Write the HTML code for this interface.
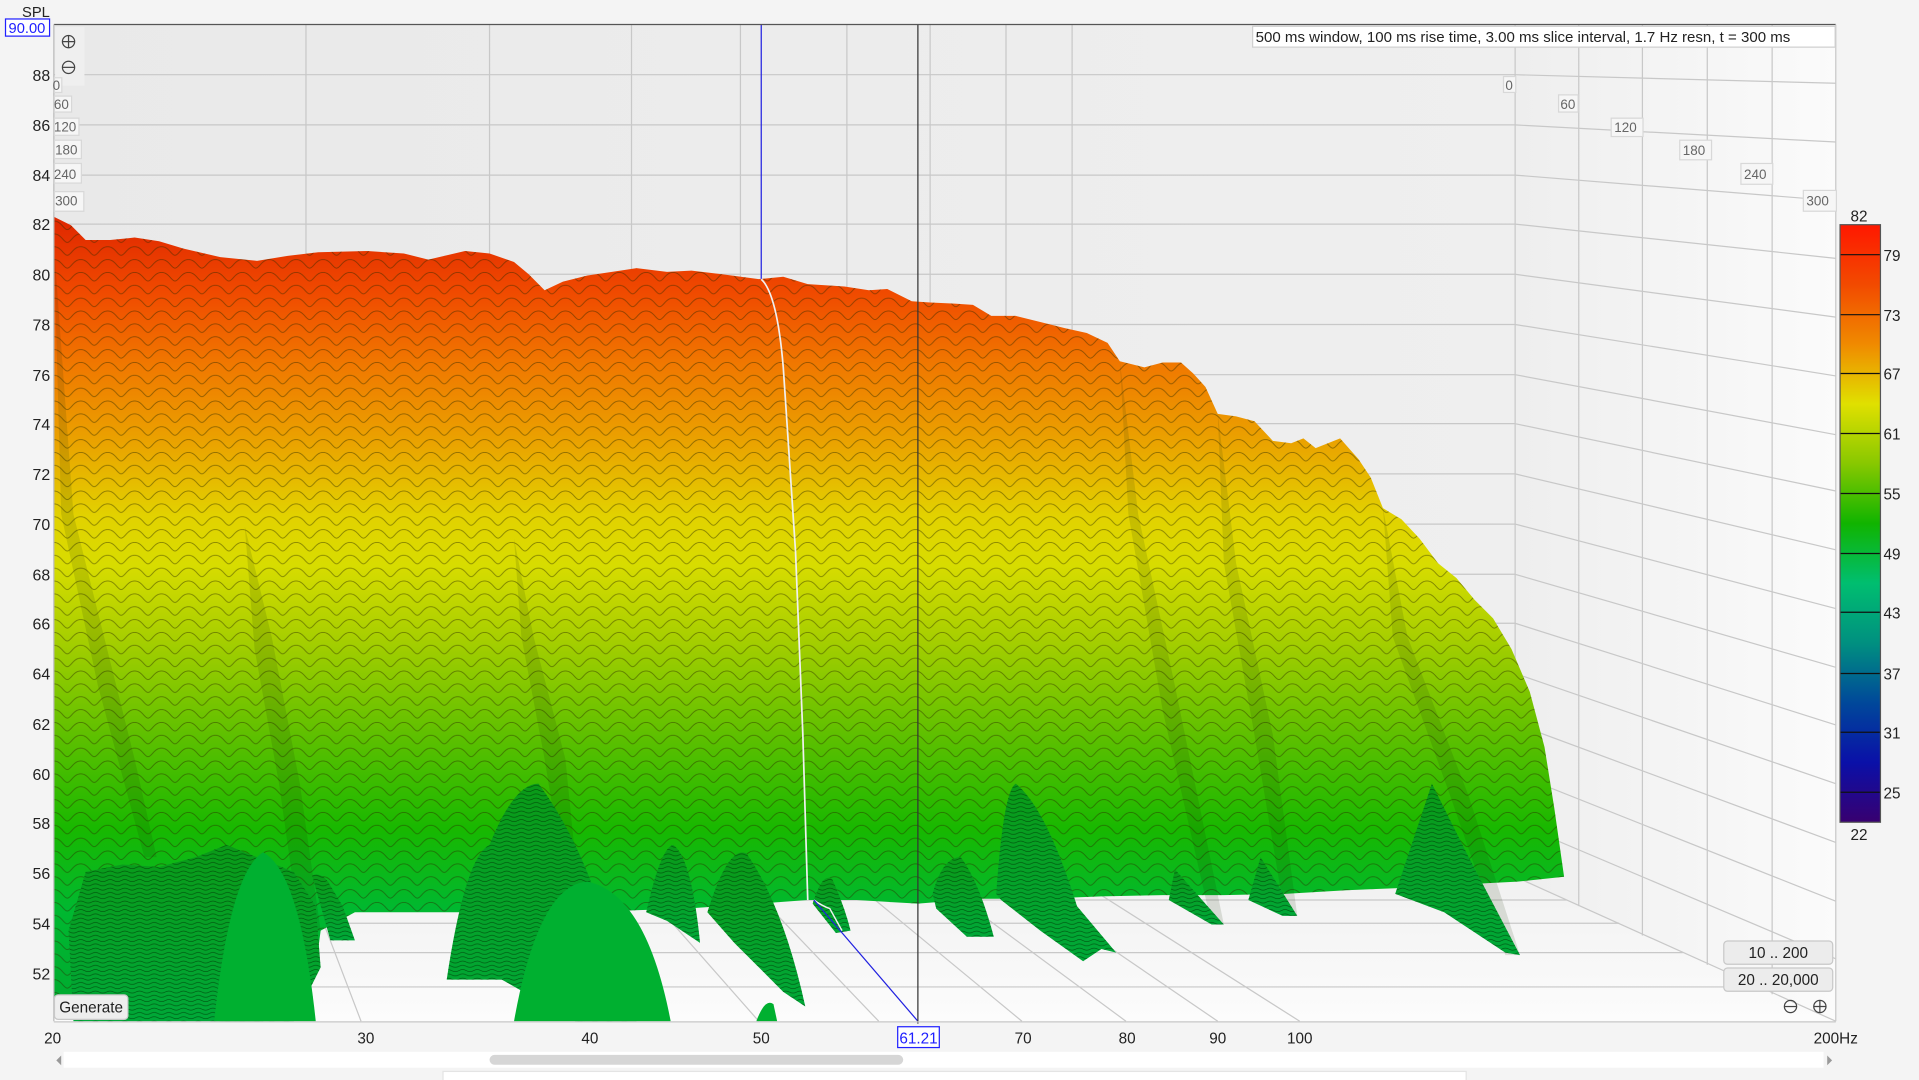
<!DOCTYPE html>
<html><head><meta charset="utf-8"><style>
html,body{margin:0;padding:0;background:#f4f4f4;overflow:hidden}
svg{display:block}
text{font-family:"Liberation Sans",Arial,sans-serif}
</style></head><body>
<svg width="1919" height="1080" viewBox="0 0 1568 882" preserveAspectRatio="none" xmlns="http://www.w3.org/2000/svg">
<defs>
<linearGradient id="wall" x1="0" y1="0" x2="1" y2="0">
<stop offset="0" stop-color="#e9e9e9"/><stop offset="1" stop-color="#efefef"/></linearGradient>
<linearGradient id="rwall" x1="0" y1="0" x2="1" y2="0">
<stop offset="0" stop-color="#eeeeee"/><stop offset="1" stop-color="#fbfbfb"/></linearGradient>
<linearGradient id="floor" x1="0" y1="0" x2="0" y2="1">
<stop offset="0" stop-color="#f1f1f1"/><stop offset="1" stop-color="#fcfcfc"/></linearGradient>
<linearGradient id="surf" gradientUnits="userSpaceOnUse" x1="0" y1="180" x2="0" y2="834">
<stop offset="0" stop-color="#e02800"/>
<stop offset="0.09" stop-color="#f04a00"/>
<stop offset="0.18" stop-color="#f07800"/>
<stop offset="0.28" stop-color="#eaa400"/>
<stop offset="0.37" stop-color="#e2d200"/>
<stop offset="0.43" stop-color="#d8dc00"/>
<stop offset="0.52" stop-color="#a8cf00"/>
<stop offset="0.64" stop-color="#60c000"/>
<stop offset="0.76" stop-color="#18b800"/>
<stop offset="0.86" stop-color="#00b830"/>
<stop offset="1" stop-color="#00a830"/>
</linearGradient>
<linearGradient id="mound" x1="0" y1="0" x2="0" y2="1">
<stop offset="0" stop-color="#0a9a18"/><stop offset="1" stop-color="#00a838"/></linearGradient>
<linearGradient id="cbar" x1="0" y1="0" x2="0" y2="1">
<stop offset="0" stop-color="#ff1800"/>
<stop offset="0.1" stop-color="#f24a00"/>
<stop offset="0.2" stop-color="#f08a00"/>
<stop offset="0.3" stop-color="#e0e000"/>
<stop offset="0.4" stop-color="#88c800"/>
<stop offset="0.5" stop-color="#10b400"/>
<stop offset="0.6" stop-color="#00be70"/>
<stop offset="0.7" stop-color="#009080"/>
<stop offset="0.8" stop-color="#00489a"/>
<stop offset="0.9" stop-color="#0a10a8"/>
<stop offset="1" stop-color="#380070"/>
</linearGradient>
<pattern id="c" width="22" height="10.5" patternUnits="userSpaceOnUse">
<path d="M0 2 C6 2 8 9 11 9 S16 2 22 2" fill="none" stroke="#2a2a00" stroke-opacity=".5" stroke-width=".7"/>
</pattern>
<pattern id="cm" width="12" height="3.5" patternUnits="userSpaceOnUse">
<path d="M0 2.5 C3 2.5 3 0.8 6 0.8 S9 2.5 12 2.5" fill="none" stroke="#002800" stroke-opacity=".7" stroke-width=".5"/>
</pattern>
<path id="s" d="M44 177 L58 184 L70 196 L90 196 L110 194 L130 197 L150 203 L180 210 L210 213 L235 209 L260 206 L300 205 L330 207 L350 212 L380 205 L400 207 L420 214 L432 224 L445 237 L460 230 L480 225 L500 222 L520 219 L545 222 L565 221 L590 224 L620 228 L640 226 L660 232 L690 234 L710 237 L725 236 L745 246 L760 247 L780 248 L795 249 L810 258 L830 258 L850 263 L870 268 L888 272 L905 280 L915 295 L935 300 L950 296 L965 296 L975 305 L985 316 L995 338 L1010 340 L1025 344 L1040 360 L1055 362 L1065 358 L1075 366 L1085 362 L1095 358 L1110 375 L1120 390 L1130 415 L1145 424 L1160 440 L1175 460 L1190 472 L1205 490 L1220 505 L1235 530 L1250 565 L1262 610 L1270 660 L1278 716 L1240 720 L1200 722 L1150 725 L1100 727 L1050 730 L1000 731 L950 731 L900 732 L850 734 L800 734 L750 738 L700 735 L660 735 L620 738 L560 742 L500 744 L440 745 L380 745 L320 745 L290 745 L262 760 L258 790 L240 812 L215 834 L180 834 L140 826 L110 826 L80 830 L44 830 Z"/>
<path id="m1" d="M60 834 L56 760 L70 712 L100 706 L130 708 L160 700 L185 690 L210 700 L240 712 L258 740 L262 790 L240 834 Z"/>
<path id="m2" d="M255 715 Q262 712 268 720 L280 740 L290 768 L270 768 Z"/>
<path id="m3" d="M365 800 Q380 700 400 690 Q420 640 440 640 Q470 680 490 740 L520 834 L470 834 L410 800 Z"/>
<path id="m4" d="M528 745 Q540 692 550 690 Q565 700 572 770 L545 752 Z"/>
<path id="m5" d="M578 745 Q595 690 610 697 Q640 740 658 822 L640 810 L600 770 Z"/>
<path id="m6" d="M664 738 Q672 712 680 718 Q690 740 695 760 L683 762 Z"/>
<path id="m7" d="M762 730 Q770 700 785 700 Q800 720 812 765 L790 765 L765 742 Z"/>
<path id="m8" d="M814 730 Q820 645 830 640 Q855 660 880 740 L912 778 L900 775 L885 785 L850 760 L818 735 Z"/>
<path id="m9" d="M960 710 L1000 755 L990 755 L955 735 Z"/>
<path id="m10" d="M1030 700 L1060 748 L1048 748 L1020 735 Z"/>
<path id="m11" d="M1170 640 L1200 700 L1242 780 L1230 778 L1180 745 L1140 730 Z"/>
</defs>

<rect x="44" y="20" width="1194" height="696" fill="url(#wall)"/>
<polygon points="1238,20 1500,20 1500,834 1238,716" fill="url(#rwall)"/>
<polygon points="44,716 1238,716 1500,834 44,834" fill="url(#floor)"/>

<g stroke="#c8c8c8" stroke-width="1" fill="none">
<path d="M44 61H1238M44 102H1238M44 143H1238M44 183H1238M44 224H1238M44 265H1238M44 306H1238M44 346H1238M44 387H1238M44 428H1238M44 469H1238M44 509H1238M44 550H1238M44 591H1238M44 632H1238M44 672H1238M44 716H1238"/>
<path d="M1238 61L1500 68M1238 102L1500 116M1238 143L1500 164M1238 183L1500 211M1238 224L1500 259M1238 265L1500 307M1238 306L1500 355M1238 346L1500 401M1238 387L1500 449M1238 428L1500 497M1238 469L1500 545M1238 509L1500 592M1238 550L1500 640M1238 591L1500 688M1238 632L1500 736M1238 672L1500 783"/>
<path d="M250 20V716M400 20V716M516 20V716M605 20V716M692 20V716M760 20V716M822 20V716M876 20V716M1238 20V716"/>
<path d="M1290 20V740M1342 20V764M1395 20V788M1448 20V812"/>
<path d="M44 735H1280M44 754H1323M44 778H1375M44 806H1437"/>
<path d="M250 716L295 834M400 716L478 834M516 716L620 834M605 716L718 834M692 716L835 834M760 716L920 834M822 716L995 834M876 716L1062 834M1238 716L1500 834"/>
</g>

<use href="#s" fill="url(#surf)"/>
<use href="#s" fill="url(#c)"/>

<g fill="#1a3000" fill-opacity=".13">
<path d="M44 200 L60 420 L110 620 L128 700 L118 700 L80 560 L50 420 Z"/>
<path d="M200 430 L222 520 L245 640 L262 760 L245 760 L228 640 L208 530 Z"/>
<path d="M420 440 L436 520 L462 620 L470 700 L458 700 L445 620 L426 520 Z"/>
<path d="M915 295 L930 420 L960 560 L1000 755 L990 755 L950 580 L922 420 Z"/>
<path d="M995 338 L1010 460 L1040 600 L1060 748 L1050 748 L1025 600 L1000 460 Z"/>
<path d="M1130 415 L1150 520 L1200 650 L1242 780 L1230 780 L1185 650 L1138 520 Z"/>
</g>

<g fill="url(#mound)">
<use href="#m1"/><use href="#m2"/><use href="#m3"/><use href="#m4"/><use href="#m5"/><use href="#m6"/><use href="#m7"/><use href="#m8"/><use href="#m9"/><use href="#m10"/><use href="#m11"/>
</g>
<g fill="url(#cm)">
<use href="#m1"/><use href="#m2"/><use href="#m3"/><use href="#m4"/><use href="#m5"/><use href="#m6"/><use href="#m7"/><use href="#m8"/><use href="#m9"/><use href="#m10"/><use href="#m11"/>
</g>
<path d="M175 834 Q188 712 215 696 Q245 712 258 834 Z" fill="#00b030"/>
<path d="M420 834 Q440 722 480 720 Q528 730 548 834 Z" fill="#00b030"/>
<path d="M618 834 Q625 815 632 820 L635 834 Z" fill="#00b030"/>

<line x1="622" y1="20" x2="622" y2="228" stroke="#2020e0" stroke-width="1"/>
<path d="M622 228 Q635 240 640 300 L650 450 L656 600 L660 735" fill="none" stroke="#f0f0f0" stroke-width="1.4"/>
<path d="M665 735 Q672 740 678 742 L688 760" fill="none" stroke="#f0f0f0" stroke-width="1.2"/>
<line x1="665" y1="735" x2="750" y2="834" stroke="#2020e0" stroke-width="1"/>
<line x1="750" y1="20" x2="750" y2="836" stroke="#333" stroke-width="1"/>

<line x1="44" y1="20" x2="1500" y2="20" stroke="#555" stroke-width="1"/>
<line x1="44" y1="20" x2="44" y2="834" stroke="#bbb"/>
<line x1="1500" y1="20" x2="1500" y2="834" stroke="#c8c8c8"/>
<line x1="44" y1="834.5" x2="1500" y2="834.5" stroke="#c8c8c8"/>

<rect x="1023.5" y="21.5" width="476" height="17" fill="#fff" stroke="#d0d0d0"/>
<text x="1026" y="34.5" font-size="12.3" fill="#222">500 ms window, 100 ms rise time, 3.00 ms slice interval, 1.7 Hz resn, t = 300 ms</text>

<rect x="45" y="22" width="24" height="48" fill="#efefef"/>
<g fill="none" stroke="#444" stroke-width="1">
<circle cx="56" cy="34" r="5"/><path d="M51 34H61M56 29V39"/>
<circle cx="56" cy="55" r="5"/><path d="M51 55H61"/>
<circle cx="1463" cy="822" r="5"/><path d="M1458 822H1468"/>
<circle cx="1487" cy="822" r="5"/><path d="M1482 822H1492M1487 817V827"/>
</g>

<g font-size="11" fill="#666">
<rect x="44.5" y="63.5" width="6" height="12" fill="#f6f6f6" stroke="#d8d8d8"/><text x="43" y="73.5">0</text>
<rect x="44.5" y="78.5" width="14" height="13" fill="#f6f6f6" stroke="#d8d8d8"/><text x="44" y="89">60</text>
<rect x="44.5" y="96.5" width="20" height="14" fill="#f6f6f6" stroke="#d8d8d8"/><text x="44" y="107.5">120</text>
<rect x="44.5" y="114.5" width="22" height="15" fill="#f6f6f6" stroke="#d8d8d8"/><text x="45" y="126">180</text>
<rect x="44.5" y="133.5" width="22" height="16" fill="#f6f6f6" stroke="#d8d8d8"/><text x="44" y="146">240</text>
<rect x="44.5" y="156.5" width="24" height="16" fill="#f6f6f6" stroke="#d8d8d8"/><text x="45" y="168">300</text>
<rect x="1228.5" y="62.5" width="10" height="13" fill="#f6f6f6" stroke="#d8d8d8"/><text x="1230" y="73.5">0</text>
<rect x="1273.5" y="77.5" width="16" height="14" fill="#f6f6f6" stroke="#d8d8d8"/><text x="1275" y="89">60</text>
<rect x="1316.5" y="96.5" width="26" height="15" fill="#f6f6f6" stroke="#d8d8d8"/><text x="1319" y="108">120</text>
<rect x="1372.5" y="114.5" width="26" height="16" fill="#f6f6f6" stroke="#d8d8d8"/><text x="1375" y="126.5">180</text>
<rect x="1422.5" y="133.5" width="26" height="17" fill="#f6f6f6" stroke="#d8d8d8"/><text x="1425" y="146">240</text>
<rect x="1473.5" y="155.5" width="27" height="17" fill="#f6f6f6" stroke="#d8d8d8"/><text x="1476" y="168">300</text>
</g>

<text x="18" y="14" font-size="12" fill="#222">SPL</text>
<rect x="4.5" y="15.5" width="36" height="14" fill="#fff" stroke="#2020ff"/>
<text x="7" y="27" font-size="12" fill="#2020ff">90.00</text>
<g font-size="13" fill="#222" text-anchor="end">
<text x="41" y="66">88</text><text x="41" y="107">86</text><text x="41" y="148">84</text><text x="41" y="188">82</text>
<text x="41" y="229">80</text><text x="41" y="270">78</text><text x="41" y="311">76</text><text x="41" y="351">74</text>
<text x="41" y="392">72</text><text x="41" y="433">70</text><text x="41" y="474">68</text><text x="41" y="514">66</text>
<text x="41" y="555">64</text><text x="41" y="596">62</text><text x="41" y="637">60</text><text x="41" y="677">58</text>
<text x="41" y="718">56</text><text x="41" y="759">54</text><text x="41" y="800">52</text>
</g>

<g font-size="12.5" fill="#222" text-anchor="middle">
<text x="43" y="852">20</text><text x="299" y="852">30</text><text x="482" y="852">40</text><text x="622" y="852">50</text>
<text x="836" y="852">70</text><text x="921" y="852">80</text><text x="995" y="852">90</text><text x="1062" y="852">100</text>
<text x="1500" y="852">200Hz</text>
</g>
<rect x="733.5" y="838.5" width="34" height="17" fill="#fff" stroke="#2020ff"/>
<text x="750.5" y="852" font-size="12.5" fill="#2020ff" text-anchor="middle">61.21</text>

<rect x="44.5" y="812.5" width="60" height="20" rx="3" fill="#eeeeee" stroke="#c8c8c8"/>
<text x="74.5" y="827" font-size="12.5" fill="#222" text-anchor="middle">Generate</text>
<rect x="1408.5" y="768.5" width="89" height="19" rx="3" fill="#ececec" stroke="#c8c8c8"/>
<text x="1453" y="782.5" font-size="12.5" fill="#222" text-anchor="middle">10 .. 200</text>
<rect x="1408.5" y="790.5" width="89" height="19" rx="3" fill="#ececec" stroke="#c8c8c8"/>
<text x="1453" y="804.5" font-size="12.5" fill="#222" text-anchor="middle">20 .. 20,000</text>

<rect x="1503.5" y="183.5" width="33" height="488" fill="url(#cbar)" stroke="#555"/>
<g stroke="#111" stroke-width="1">
<path d="M1504 208H1536M1504 257H1536M1504 305H1536M1504 354H1536M1504 403H1536M1504 452H1536M1504 500H1536M1504 550H1536M1504 598H1536M1504 647H1536"/>
</g>
<g font-size="12.5" fill="#222">
<text x="1512" y="181">82</text>
<text x="1539" y="213">79</text><text x="1539" y="262">73</text><text x="1539" y="310">67</text><text x="1539" y="359">61</text>
<text x="1539" y="408">55</text><text x="1539" y="457">49</text><text x="1539" y="505">43</text><text x="1539" y="555">37</text>
<text x="1539" y="603">31</text><text x="1539" y="652">25</text>
<text x="1512" y="686">22</text>
</g>

<rect x="52" y="859" width="1438" height="13" fill="#fff"/>
<rect x="400" y="861.5" width="338" height="8" rx="4" fill="#d6d6d6"/>
<path d="M50 862L46 866L50 870Z" fill="#999"/>
<path d="M1493 862L1497 866L1493 870Z" fill="#999"/>
<rect x="362" y="875" width="836" height="10" fill="#fff" stroke="#e4e4e4"/>
</svg>
</body></html>
